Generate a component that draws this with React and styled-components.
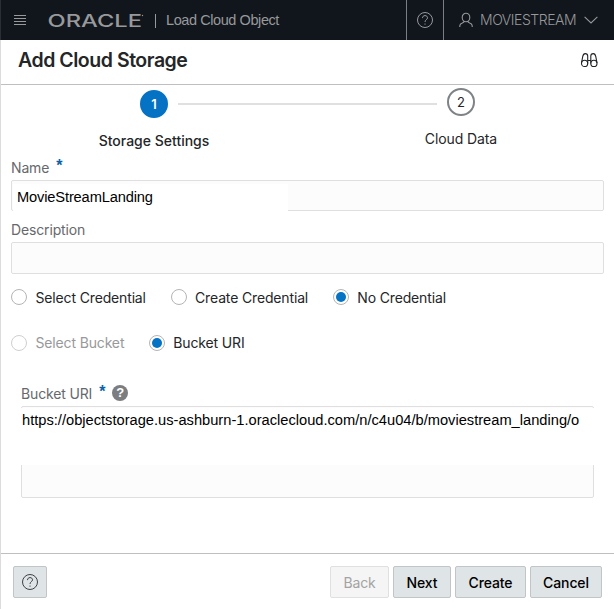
import React from "react";
import styled, { createGlobalStyle, css } from "styled-components";

const GlobalStyle = createGlobalStyle`
  * { box-sizing: border-box; }
  html, body { margin: 0; padding: 0; }
  body { background: #fff; overflow: hidden; }
  button, input, textarea { font: inherit; margin: 0; }
`;

const Window = styled.div`
  display: flex;
  flex-direction: column;
  width: 614px;
  height: 609px;
  border-left: 1px solid #dcdcdc;
  background: #fff;
  color: #242628;
  font: 400 14px/20px Inter, "Liberation Sans", sans-serif;
  white-space: nowrap;
`;

const TopBar = styled.header`
  display: flex;
  flex: none;
  height: 40px;
  margin-left: -1px;
  border-left: 1px solid #2b2f35;
  background: #11151c;
  color: #97999b;
`;

const Brand = styled.div`
  display: flex;
  flex: 1;
  align-items: center;
  padding-left: 13px;
`;

const Wordmark = styled.svg`
  width: 96px;
  height: 20px;
  margin-left: 22px;
  overflow: visible;
`;

const Divider = styled.span`
  width: 1px;
  height: 14px;
  margin: 1px 10px 0 11px;
  background: #97999b;
`;

const AppName = styled.span`
  font: 400 14.5px/20px "Liberation Sans", Arial, sans-serif;
  letter-spacing: -0.42px;
`;

const HeaderCell = styled.div`
  display: flex;
  align-items: center;
  width: ${(p) => p.$width}px;
  padding-left: ${(p) => p.$pad}px;
  border-left: 1px solid #7b7e82;
`;

const UserName = styled.span`
  margin: 0 8px 0 7px;
  font-weight: 350;
  letter-spacing: -0.45px;
`;

const TitleBar = styled.div`
  display: flex;
  flex: none;
  align-items: center;
  justify-content: space-between;
  height: 45px;
  padding: 0 16px 4px 17px;
  border-bottom: 1px solid #bfbfbf;
`;

const Title = styled.h1`
  margin: 0;
  font-size: 19.5px;
  line-height: 28px;
  font-weight: 600;
  letter-spacing: -0.46px;
`;

const Steps = styled.div`
  display: flex;
  align-items: flex-start;
  flex: none;
  height: 73px;
  padding: 3px 0 0 93px;
`;

const Step = styled.div`
  display: flex;
  flex-direction: column;
  align-items: center;
  width: 120px;
  gap: 13px;
  padding-top: ${(p) => (p.$active ? 2 : 0)}px;
  font-weight: ${(p) => (p.$active ? 500 : 400)};
  letter-spacing: ${(p) => (p.$active ? 0 : -0.1)}px;
`;

const StepNumber = styled.span`
  display: grid;
  place-items: center;
  width: 28px;
  height: 28px;
  border: 2px solid ${(p) => (p.$active ? "#0572c4" : "#7d8387")};
  border-radius: 50%;
  background: ${(p) => (p.$active ? "#0572c4" : "#fff")};
  color: ${(p) => (p.$active ? "#fff" : "#242628")};
  font-size: 13px;
  font-weight: ${(p) => (p.$active ? 600 : 400)};
`;

const StepLine = styled.div`
  width: 259px;
  height: 2px;
  margin: 15px -36px 0;
  background: #e0e0e0;
`;

const Form = styled.main`
  display: flex;
  flex-direction: column;
  flex: 1;
  padding: 0 10px;
`;

const Label = styled.label`
  display: flex;
  height: 22px;
  color: #66696c;
  letter-spacing: -0.15px;
`;

const Required = styled.span`
  margin: -2px 0 0 7px;
  color: #0a63a8;
  font: 700 16px/20px "Liberation Sans", sans-serif;
`;

const inputFrame = css`
  border: 1px solid #dfdfdf;
  border-radius: 2px;
  background: #fcfcfc;
`;

const enteredText = css`
  background: #fff;
  color: #000;
  font: 400 14.67px/18px "Liberation Sans", Arial, sans-serif;
`;

const Field = styled.div`
  display: flex;
  height: ${(p) => p.$height}px;
  margin-bottom: ${(p) => p.$after}px;
  ${inputFrame}
`;

const NameValue = styled.span`
  ${enteredText}
  width: 275px;
  height: 27px;
  margin: 3px 0 0 1px;
  padding: 4px 0 0 4px;
  letter-spacing: -0.15px;
`;

const RadioRow = styled.div`
  display: flex;
  height: 20px;
  gap: ${(p) => p.$gap}px;
  margin-bottom: ${(p) => p.$after}px;
`;

const Radio = styled.label`
  display: flex;
  align-items: center;
  gap: 8.5px;
  color: ${(p) => (p.$disabled ? "#97999b" : "#242628")};
  letter-spacing: -0.15px;
`;

const RadioMark = styled.span`
  display: grid;
  place-items: center;
  width: 16px;
  height: 16px;
  margin-top: ${(p) => (p.$low ? 0 : -2)}px;
  border: 1px solid ${(p) => (p.$disabled ? "#cfcfcf" : "#b4b4b4")};
  border-radius: 50%;
  &::after {
    content: "";
    width: 10px;
    height: 10px;
    border-radius: 50%;
    background: ${(p) => (p.$checked ? "#0572c4" : "transparent")};
  }
`;

const UriGroup = styled.section`
  display: flex;
  flex-direction: column;
  padding: 0 10px;
`;

const HelpBadge = styled.span`
  display: grid;
  place-items: center;
  width: 16px;
  height: 16px;
  margin: 1px 0 0 7px;
  border-radius: 50%;
  background: #7b7d80;
  color: #fff;
  font: 700 13px/16px "Liberation Sans", sans-serif;
`;

const UriField = styled.div`
  width: 573px;
  height: 92px;
  ${inputFrame}
`;

const UriValue = styled.div`
  ${enteredText}
  height: 57px;
  margin: 1px -1px 0;
  padding: 3px 0 0 1px;
`;

const Footer = styled.footer`
  display: flex;
  flex: none;
  height: 56px;
  padding: 12px 12px 0 12px;
  gap: 4px;
  border-top: 1px solid #bfbfbf;
`;

const Button = styled.button`
  display: grid;
  place-items: center;
  width: ${(p) => p.$width}px;
  height: 32px;
  padding: 1px 0 0;
  border: 1px solid #c2c5c8;
  border-radius: 2px;
  background: #dfe4e7;
  color: #000;
  font-weight: 450;
  letter-spacing: -0.12px;
  &:first-child { margin-right: auto; padding: 0; color: #3c4246; }
  &:disabled { border-color: #e0e0e0; background: #f5f5f5; color: #a3a3a3; font-weight: 400; }
`;

const HelpIcon = () => (
  <svg width="18" height="18" viewBox="0 0 18 18" fill="none" stroke="currentColor">
    <circle cx="9" cy="9" r="7.5" />
    <path d="M6.5 7.1C6.5 5.5 7.5 4.6 9 4.6s2.5.9 2.5 2.2c0 2-2.5 1.8-2.5 4.2" />
    <path d="M9 12.5v1.2" />
  </svg>
);

const MenuIcon = () => (
  <svg width="12" height="12" viewBox="0 0 12 12" stroke="currentColor">
    <path d="M0 1.5h12M0 4.5h12M0 7.5h12M0 10.5h12" />
  </svg>
);

const UserIcon = () => (
  <svg width="14" height="16" viewBox="0 0 14 16" fill="none" stroke="currentColor" strokeWidth="1.1">
    <ellipse cx="7" cy="5.5" rx="3.8" ry="4.3" />
    <path d="M.8 15v-1.2c0-1.5 1-2.3 2.5-2.8l1.5-.8.2-1M13.2 15v-1.2c0-1.5-1-2.3-2.5-2.8l-1.5-.8-.2-1" />
  </svg>
);

const ChevronIcon = () => (
  <svg width="14" height="8" viewBox="0 0 14 8" fill="none" stroke="currentColor" strokeWidth="1.1">
    <path d="M.6.8 7 7 13.4.8" />
  </svg>
);

const BinocularsIcon = () => (
  <svg width="17" height="16" viewBox="0 0 17 16" fill="none" stroke="#202326" strokeWidth="1.1">
    <circle cx="3.6" cy="11.4" r="3.1" />
    <circle cx="12.9" cy="11.4" r="3.1" />
    <path d="M.5 11 1.7 4.6C2.1 2.6 2.6 1.6 4.2 1.6S6.7 2.4 6.7 4v7.4M16 11 14.8 4.6C14.4 2.6 13.9 1.6 12.3 1.6S9.8 2.4 9.8 4v7.4M6.7 8.5h3.1" />
  </svg>
);

export default function App() {
  return (
    <>
      <GlobalStyle />
      <Window>
        <TopBar>
          <Brand>
            <MenuIcon />
            <Wordmark viewBox="0 0 96 20" fill="currentColor" fontFamily="Inter, sans-serif">
              <text x="-.5" y="16.7" fontSize="17" fontWeight="450" textLength="94.5" lengthAdjust="spacingAndGlyphs">ORACLE</text>
              <circle cx="94.5" cy="5.5" r=".7" />
            </Wordmark>
            <Divider />
            <AppName>Load Cloud Object</AppName>
          </Brand>
          <HeaderCell $width={37} $pad={9}><HelpIcon /></HeaderCell>
          <HeaderCell $width={171} $pad={15}>
            <UserIcon />
            <UserName>MOVIESTREAM</UserName>
            <ChevronIcon />
          </HeaderCell>
        </TopBar>
        <TitleBar>
          <Title>Add Cloud Storage</Title>
          <BinocularsIcon />
        </TitleBar>
        <Steps>
          <Step $active><StepNumber $active>1</StepNumber>Storage Settings</Step>
          <StepLine />
          <Step><StepNumber>2</StepNumber>Cloud Data</Step>
        </Steps>
        <Form>
          <Label>Name<Required>*</Required></Label>
          <Field $height={31} $after={9}><NameValue>MovieStreamLanding</NameValue></Field>
          <Label>Description</Label>
          <Field $height={32} $after={14} />
          <RadioRow $gap={24.7} $after={25}>
            <Radio><RadioMark />Select Credential</Radio>
            <Radio><RadioMark />Create Credential</Radio>
            <Radio><RadioMark $checked />No Credential</Radio>
          </RadioRow>
          <RadioRow $gap={24.5} $after={31}>
            <Radio $disabled><RadioMark $disabled $low />Select Bucket</Radio>
            <Radio><RadioMark $checked $low />Bucket URI</Radio>
          </RadioRow>
          <UriGroup>
            <Label>Bucket URI<Required>*</Required><HelpBadge>?</HelpBadge></Label>
            <UriField>
              <UriValue>https://objectstorage.us-ashburn-1.oraclecloud.com/n/c4u04/b/moviestream_landing/o</UriValue>
            </UriField>
          </UriGroup>
        </Form>
        <Footer>
          <Button $width={34} aria-label="Help"><HelpIcon /></Button>
          <Button $width={59} disabled>Back</Button>
          <Button $width={58}>Next</Button>
          <Button $width={71}>Create</Button>
          <Button $width={72}>Cancel</Button>
        </Footer>
      </Window>
    </>
  );
}
